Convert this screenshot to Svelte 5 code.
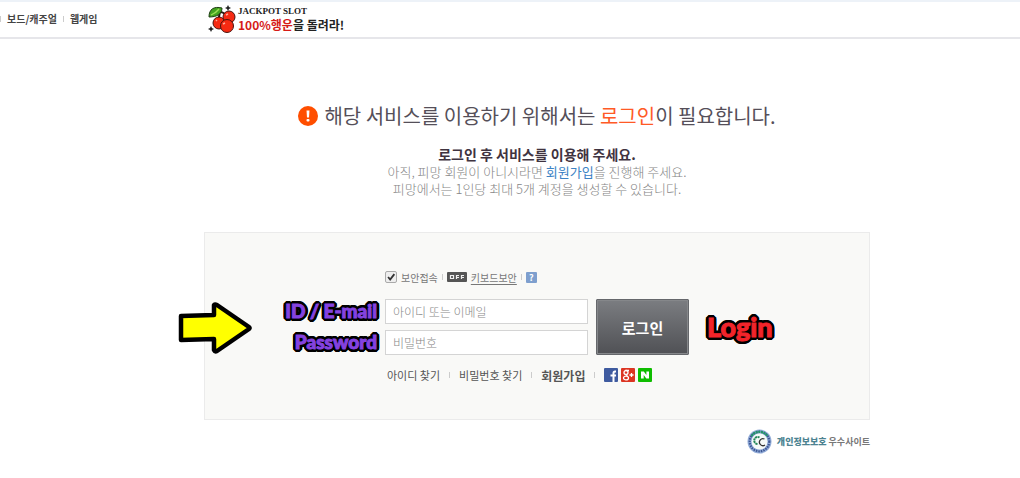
<script>
  let secure = $state(true);
  let userId = $state('');
  let password = $state('');
</script>

<header>
  <nav>
    <i class="bar"></i>
    <a href="#casual">보드/캐주얼</a>
    <i class="bar"></i>
    <a href="#web">웹게임</a>
  </nav>
  <a class="promo" href="#jackpot">
    <svg width="28" height="29" viewBox="0 0 28 29" aria-hidden="true">
      <path d="M12 7Q17 7 19 13M12 7Q10 12 12 17" fill="none" stroke="#241b12" stroke-width="2" />
      <g stroke="#4a120d" stroke-width="1">
        <circle cx="21" cy="12" r="6" fill="#f62a12" />
        <circle cx="11" cy="18" r="6" fill="#f62a12" />
        <circle cx="19" cy="21" r="6.500" fill="#f62a12" />
        <path d="M1 12C1 4 6 1 14 3C14 9 9 12 1 12Z" fill="#43a321" stroke="#1d3b12" />
      </g>
      <path d="M3 10Q8 8 11 4" fill="none" stroke="#9cde55" stroke-width="1.300" />
      <path d="M18 10l2-1M8 16l1-1M15 19l2-1" stroke="#ffaa98" stroke-width="1.500" />
      <path d="M20 0l1 2 2 1-2 1-1 2-1-2-2-1 2-1zM3 21l1 2 2 1-2 1-1 2-1-2-2-1 2-1z" fill="#222" />
    </svg>
    <span class="slogan">
      <span class="jackpot">JACKPOT SLOT</span>
      <span class="luck"><em>100%행운</em>을 돌려라!</span>
    </span>
  </a>
</header>

<main>
  <section class="intro">
    <h1>
      <svg width="20" height="20" viewBox="0 0 20 20" aria-hidden="true">
        <circle cx="10" cy="10" r="10" fill="#ff4e00" />
        <path d="M8.500 4.500h3l-.5 7H9z" fill="#fff" />
        <rect x="8.500" y="13" width="3" height="2.500" rx="1" fill="#fff" />
      </svg>
      <span>해당 서비스를 이용하기 위해서는 <em>로그인</em>이 필요합니다.</span>
    </h1>
    <strong>로그인 후 서비스를 이용해 주세요.</strong>
    <p>아직, 피망 회원이 아니시라면 <a href="#join">회원가입</a>을 진행해 주세요.</p>
    <p>피망에서는 1인당 최대 5개 계정을 생성할 수 있습니다.</p>
  </section>

  <form class="panel" onsubmit={(e) => e.preventDefault()}>
    <svg class="arrow" width="74" height="52" viewBox="0 0 74 52" aria-hidden="true">
      <path d="M3 14L36 13V3Q37 2 39 3L71 25Q72 26 71 27L39 49Q37 50 36 48V37L3 38Z" fill="#ff0" stroke="#000" stroke-width="4.500" stroke-linejoin="round" />
    </svg>

    <div class="security">
      <label class="check">
        <input type="checkbox" bind:checked={secure} />
        <svg width="12" height="12" viewBox="0 0 12 12" aria-hidden="true">
          {#if secure}<path d="M2.500 6L5 9L10 2.500" fill="none" stroke="#333" stroke-width="2.200" />{/if}
        </svg>
        <span>보안접속</span>
      </label>
      <i class="bar"></i>
      <button type="button" class="off" aria-label="OFF">
        <svg width="20" height="10" viewBox="0 0 20 10" aria-hidden="true">
          <rect width="20" height="10" rx="1" fill="#555" />
          <path d="M3.500 3.500h3v3h-3zM9.500 7V3.500H12M9.500 5.500H12M14.500 7V3.500H17M14.500 5.500H17" fill="none" stroke="#eee" stroke-width="1.200" />
        </svg>
      </button>
      <a class="keyboard" href="#keyboard">키보드보안</a>
      <i class="bar"></i>
      <button type="button" class="help">?</button>
    </div>

    <div class="fields">
      <label class="note" for="user">ID / E-mail</label>
      <input id="user" class="text" type="text" placeholder="아이디 또는 이메일" bind:value={userId} />
      <label class="note" for="pass">Password</label>
      <input id="pass" class="text" type="password" placeholder="비밀번호" bind:value={password} />
      <button class="submit" type="submit">로그인</button>
      <span class="note login">Login</span>
    </div>

    <div class="links">
      <a href="#find-id">아이디 찾기</a>
      <i class="bar"></i>
      <a href="#find-password">비밀번호 찾기</a>
      <i class="bar"></i>
      <a class="join" href="#join">회원가입</a>
      <i class="bar"></i>
      <span class="social">
        <a href="#facebook" aria-label="Facebook">
          <svg width="14" height="14" viewBox="0 0 14 14"><rect width="14" height="14" rx="1" fill="#3f5b9f" /><path d="M12 3.500h-1Q9.500 3.500 9.500 5v9M6.500 7.500H12" fill="none" stroke="#fff" stroke-width="2" /></svg>
        </a>
        <a href="#google" aria-label="Google+">
          <svg width="14" height="14" viewBox="0 0 14 14"><rect width="14" height="14" rx="1" fill="#dc3522" /><g fill="none" stroke="#fff" stroke-width="1.300"><ellipse cx="5" cy="4.500" rx="2" ry="2" /><path d="M4.500 2.500H8M6 6.500Q5 7.500 6.500 8" /><ellipse cx="5" cy="10" rx="2.500" ry="1.900" /><path d="M8.500 7h4M10.500 5v4" /></g></svg>
        </a>
        <a href="#naver" aria-label="Naver">
          <svg width="14" height="14" viewBox="0 0 14 14"><rect width="14" height="14" rx="1" fill="#0fbd00" /><path d="M3 3.500h2.800l2.600 3.600V3.500H11v7H8.300L5.700 6.900v3.600H3z" fill="#fff" /></svg>
        </a>
      </span>
    </div>
  </form>

  <footer>
    <svg width="25" height="25" viewBox="0 0 25 25" aria-hidden="true">
      <circle cx="12.500" cy="12.500" r="12" fill="#92acd8" />
      <circle cx="12.500" cy="12.500" r="9.800" fill="none" stroke="#3d5794" stroke-width="2.200" stroke-dasharray="1.500 1" />
      <path d="M4.500 7A9.800 9.800 0 0 1 20.500 7" fill="none" stroke="#239768" stroke-width="2.400" stroke-dasharray="2 .7" />
      <circle cx="12.500" cy="12.500" r="8" fill="#f5faf8" />
      <path d="M12.500 8.500A3.500 3.500 0 1 0 11 15" fill="none" stroke="#25875a" stroke-width="2" stroke-dasharray="2 .5" />
      <path d="M17.500 10A3.500 3.500 0 1 0 18 16" fill="none" stroke="#333" stroke-width="1.300" />
    </svg>
    <span><b>개인정보보호</b> 우수사이트</span>
  </footer>
</main>

<style>
  :global(body) {
    margin: 0;
    background: #fff;
    font-family: "Noto Sans CJK KR", sans-serif;
    color: #555;
  }
  a { color: inherit; text-decoration: none; }
  em { font-style: normal; }
  button { padding: 0; border: 0; font-family: inherit; }
  svg { display: block; flex: none; }
  .bar { width: 1px; height: 6px; background: #ccc; flex: none; }

  header {
    display: grid;
    grid-template-columns: 20% 1fr;
    align-items: center;
    height: 35px;
    border-top: 2px solid #edf2f8;
    border-bottom: 2px solid #e6e6ea;
  }
  nav {
    display: flex;
    align-items: center;
    gap: 6px;
    padding-bottom: 2px;
    font-size: 10px;
    font-weight: 700;
    color: #444;
    white-space: nowrap;
  }
  .promo { display: flex; align-items: center; gap: 2px; padding-left: 4px; }
  .slogan { display: flex; flex-direction: column; font-weight: 700; color: #222; white-space: nowrap; }
  .jackpot { font: 700 9px/11px "Liberation Serif", serif; }
  .luck { font-size: 12px; line-height: 16px; }
  .luck em { color: #d61b17; }

  main { max-width: 666px; margin: 0 0 0 20%; }
  .intro { text-align: center; font-size: 13px; line-height: 17px; color: #858585; padding-top: 62px; }
  h1 {
    display: flex;
    justify-content: center;
    align-items: center;
    gap: 6px;
    margin: 0 0 15px;
    font-size: 20px;
    line-height: 30px;
    font-weight: 400;
    color: #554f59;
  }
  h1 em { color: #ff5a26; }
  strong { display: block; font-size: 14px; color: #3f3340; }
  p { margin: 0; font-weight: 300; }
  p a { color: #3c82c4; font-weight: 400; }

  .panel {
    position: relative;
    box-sizing: border-box;
    margin-top: 35px;
    padding: 36px 0;
    background: #f9f9f7;
    border: 1px solid #ebebeb;
  }
  .arrow { position: absolute; left: -27px; top: 69px; }
  .security {
    display: flex;
    align-items: center;
    gap: 4px;
    height: 16px;
    padding-left: 180px;
    font-size: 10px;
    color: #777;
  }
  .check { display: flex; align-items: center; gap: 4px; position: relative; }
  .check input { position: absolute; width: 12px; height: 12px; margin: 0; opacity: 0; }
  .check svg { box-sizing: border-box; border: 1px solid #aaa; border-radius: 2px; background: #eee; }
  .off { background: none; }
  .keyboard { text-decoration: underline; text-underline-offset: 2px; }
  .help {
    width: 11px;
    height: 11px;
    border-radius: 1px;
    background: #7e9fce;
    color: #fff;
    font-size: 9px;
    font-weight: 700;
    line-height: 11px;
  }

  .fields {
    display: grid;
    grid-template-columns: 172px 203px 93px auto;
    grid-template-rows: 25px 25px;
    column-gap: 8px;
    row-gap: 6px;
    justify-content: start;
    margin-top: 14px;
  }
  .note {
    grid-column: 1;
    justify-self: end;
    font: 900 19px/24px Lato, sans-serif;
    color: #8442e0;
    -webkit-text-stroke: 1px #8442e0;
    text-shadow:
      3px 0 #000, -3px 0 #000, 0 3px #000, 0 -3px #000,
      2px 2px #000, -2px 2px #000, 2px -2px #000, -2px -2px #000,
      3px 1px #000, -3px 1px #000, 3px -1px #000, -3px -1px #000,
      1px 3px #000, -1px 3px #000, 1px -3px #000, -1px -3px #000;
    white-space: nowrap;
  }
  .text {
    grid-column: 2;
    box-sizing: border-box;
    width: 100%;
    height: 25px;
    margin: 0;
    padding: 0 7px;
    border: 1px solid #d4d4d4;
    background: #fff;
    font: 12px "Noto Sans CJK KR", sans-serif;
    color: #444;
  }
  .text::placeholder { color: #888; font-weight: 300; opacity: 1; }
  .submit {
    grid-column: 3;
    grid-row: 1 / 3;
    border: 1px solid #65676b;
    border-radius: 1px;
    background: linear-gradient(#7b7d81, #505155);
    box-shadow: inset 0 0 0 1px #85878a;
    color: #fff;
    font-size: 15px;
    font-weight: 700;
  }
  .login {
    grid-column: 4;
    grid-row: 1 / 3;
    align-self: center;
    margin-left: 10px;
    font-size: 27px;
    color: #f2242a;
    -webkit-text-stroke-color: #f2242a;
  }

  .links {
    display: flex;
    align-items: center;
    gap: 9px;
    height: 16px;
    margin-top: 12px;
    padding-left: 182px;
    font-size: 11px;
    color: #555;
    white-space: nowrap;
  }
  .join { font-size: 12px; font-weight: 700; }
  .social { display: flex; gap: 3px; }

  footer {
    display: flex;
    justify-content: flex-end;
    align-items: center;
    gap: 5px;
    margin-top: 9px;
    font-size: 9px;
    font-weight: 700;
    color: #777;
    white-space: nowrap;
  }
  footer b { color: #4d8391; }
</style>
